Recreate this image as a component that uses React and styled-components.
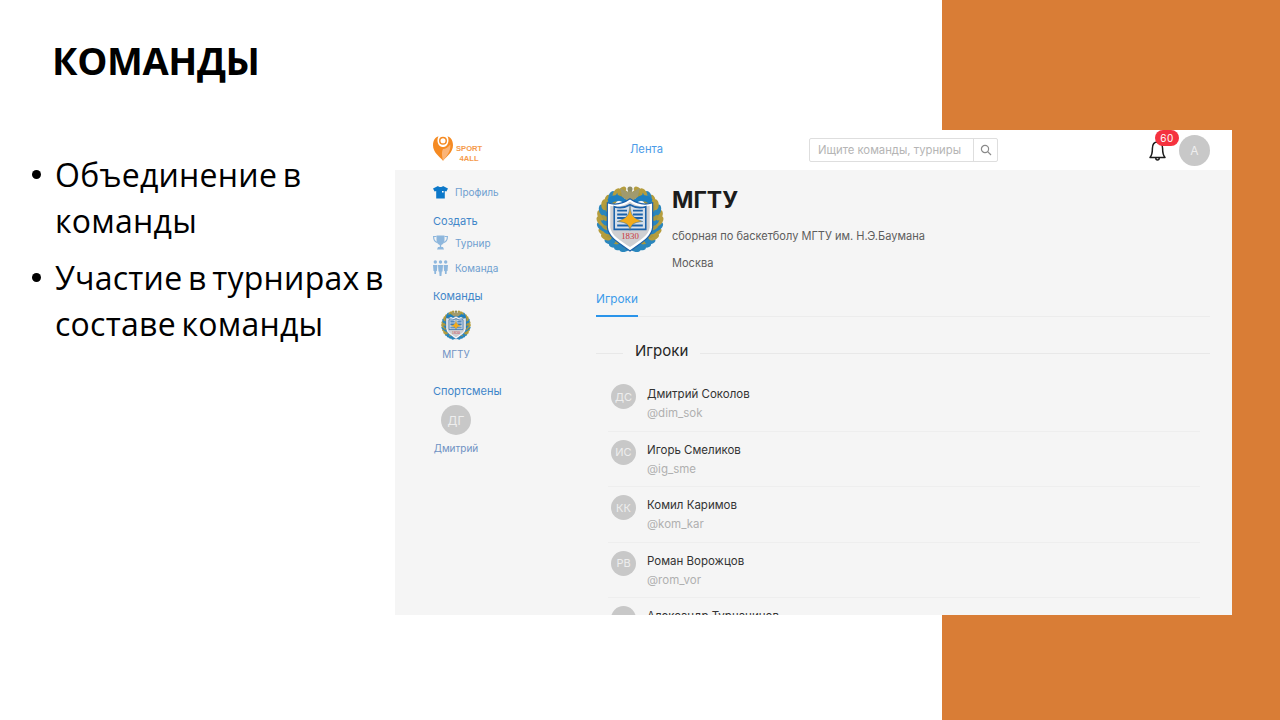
import React from "react";
import styled, { createGlobalStyle } from "styled-components";

const Global = createGlobalStyle`
  html, body { margin: 0; padding: 0; background: #fff; }
  #root { width: 1280px; height: 720px; overflow: hidden; }
  * { box-sizing: border-box; }
`;

const uiFont = `"Inter", "DejaVu Sans", sans-serif`;

const Slide = styled.div`
  position: relative;
  width: 1280px;
  height: 720px;
  background: #fff;
  display: flex;
  overflow: hidden;
`;
const OrangeStrip = styled.div`
  position: absolute;
  top: 0;
  right: 0;
  bottom: 0;
  width: 338px;
  background: #d97d36;
`;
const TextColumn = styled.section`
  width: 395px;
  flex: none;
  padding: 35px 0 0 31px;
  font-family: "Open Sans", "Liberation Sans", sans-serif;
  color: #000;
`;
const Title = styled.h1`
  margin: 0 0 67px 21px;
  font-size: 38px;
  line-height: 50px;
  font-weight: 700;
  letter-spacing: -0.4px;
`;
const Bullets = styled.ul`
  list-style: none;
  margin: 0;
  padding: 0;
  display: flex;
  flex-direction: column;
  gap: 11px;
`;
const Bullet = styled.li`
  position: relative;
  padding-left: 24px;
  font-size: 32px;
  line-height: 46px;
  letter-spacing: 0.25px;
  word-spacing: -3px;
  &::before {
    content: "";
    position: absolute;
    left: 1px;
    top: 18px;
    width: 9px;
    height: 9px;
    border-radius: 50%;
    background: #000;
  }
`;

const AppWindow = styled.div`
  position: relative;
  margin-top: 130px;
  width: 837px;
  height: 485px;
  background: #f5f5f5;
  overflow: hidden;
  font-family: ${uiFont};
  display: flex;
  flex-direction: column;
`;
const Header = styled.header`
  height: 40px;
  flex: none;
  background: #fff;
  display: flex;
  align-items: center;
  padding-left: 38px;
  position: relative;
`;
const Logo = styled.div`
  width: 197px;
  display: flex;
  align-items: center;
  gap: 3px;
  svg { margin-bottom: 3px; }
`;
const LogoText = styled.div`
  font-family: "Liberation Sans", sans-serif;
  font-size: 7.6px;
  line-height: 10px;
  font-weight: 700;
  color: #f59a4b;
  text-align: center;
  margin-top: 7px;
`;
const NavLink = styled.a`
  width: 179px;
  font-size: 11.2px;
  color: #4c9be8;
  margin-bottom: 2px;
`;
const Search = styled.div`
  width: 189px;
  height: 24px;
  background: #fff;
  border: 1px solid #dedede;
  border-radius: 2px;
  display: flex;
  align-items: center;
`;
const SearchText = styled.div`
  flex: 1;
  padding-left: 8px;
  font-size: 11.3px;
  color: #b5b5b5;
  white-space: nowrap;
  overflow: hidden;
`;
const SearchButton = styled.div`
  width: 24px;
  height: 100%;
  flex: none;
  border-left: 1px solid #dedede;
  display: flex;
  align-items: center;
  justify-content: center;
`;
const BellWrap = styled.div`
  margin-left: 149px;
  width: 21px;
  height: 24px;
  position: relative;
  top: 1px;
`;
const Badge = styled.span`
  position: absolute;
  left: 8px;
  top: -9px;
  width: 24px;
  height: 16px;
  border-radius: 8px;
  background: #f5323f;
  color: #fff;
  font-size: 10px;
  line-height: 16px;
  letter-spacing: 0.4px;
  text-align: center;
`;
const Avatar = styled.div`
  width: ${(p) => p.$size}px;
  height: ${(p) => p.$size}px;
  flex: none;
  border-radius: 50%;
  background: #c8c8c8;
  color: #eeeeee;
  font-size: ${(p) => p.$font}px;
  display: flex;
  align-items: center;
  justify-content: center;
`;
const HeaderAvatar = styled(Avatar)`
  margin-left: 11px;
`;

const Body = styled.div`
  flex: 1;
  min-height: 0;
  display: flex;
`;
const Sidebar = styled.aside`
  width: 201px;
  flex: none;
  padding: 14px 0 0 38px;
  display: flex;
  flex-direction: column;
`;
const SideItem = styled.div`
  height: ${(p) => p.$h}px;
  display: flex;
  align-items: center;
  gap: 7px;
  font-size: 10px;
  color: #6f9fd0;
`;
const SideHeading = styled.div`
  font-size: 11px;
  line-height: 14px;
  color: #3f86c9;
  margin-top: ${(p) => p.$mt}px;
  margin-bottom: ${(p) => p.$mb || 0}px;
`;
const SideEntity = styled.div`
  width: 46px;
  margin-top: ${(p) => p.$mt || 0}px;
  display: flex;
  flex-direction: column;
  align-items: center;
  gap: ${(p) => p.$gap}px;
  font-size: 10px;
  color: #6f92c4;
  white-space: nowrap;
`;

const Main = styled.main`
  flex: 1;
  min-width: 0;
  padding: 15px 22px 0 0;
`;
const TeamHead = styled.div`
  display: flex;
  gap: 8px;
  height: 102px;
`;
const TeamInfo = styled.div`
  display: flex;
  flex-direction: column;
`;
const TeamName = styled.h2`
  margin: 0;
  font-size: 23px;
  line-height: 30px;
  font-weight: 700;
  color: #1c1c1c;
`;
const TeamLine = styled.p`
  margin: ${(p) => p.$mt}px 0 0;
  font-size: 11.05px;
  line-height: 14px;
  color: #5d5d5d;
`;
const Tabs = styled.div`
  height: 30px;
  border-bottom: 1px solid #ececec;
`;
const Tab = styled.div`
  display: inline-block;
  height: 30px;
  padding-top: 5px;
  border-bottom: 2px solid #2a94ea;
  font-size: 11.8px;
  line-height: 14px;
  color: #3c9bea;
`;
const SectionTitle = styled.div`
  margin-top: 25px;
  display: flex;
  align-items: center;
  gap: 12px;
  font-size: 15px;
  line-height: 18px;
  color: #262626;
  &::before, &::after {
    content: "";
    height: 1px;
    background: #e8e8e8;
    position: relative;
    top: 2px;
  }
  &::before { width: 27px; }
  &::after { flex: 1; }
`;
const Players = styled.div`
  margin: 16px 10px 0 12px;
`;
const Player = styled.div`
  height: 55.5px;
  padding: 8px 0 0 3px;
  display: flex;
  gap: 11px;
  border-bottom: 1px solid #eeeeee;
`;
const PlayerName = styled.div`
  font-size: 11.5px;
  line-height: 16px;
  color: #333;
  margin-top: 2px;
`;
const PlayerTag = styled.div`
  font-size: 11.5px;
  line-height: 14px;
  margin-top: 4px;
  color: #b0b0b0;
`;

function Crest({ size }) {
  const leaves = [];
  for (let i = 0; i < 15; i++) {
    const deg = 100 + i * 11;
    const a = (deg * Math.PI) / 180;
    const fill = i < 4 ? "#2a86bd" : i % 3 === 0 ? "#2a86bd" : "#b59d3d";
    [30, 26].forEach((r, k) => {
      const x = 34 + r * Math.cos(a);
      const y = 35 + r * Math.sin(a);
      const f = k ? (i % 2 ? "#2a86bd" : "#a8973f") : fill;
      leaves.push(
        <ellipse key={`l${i}${k}`} cx={x} cy={y} rx="5.5" ry="3.2" fill={f} transform={`rotate(${deg + 60} ${x} ${y})`} />,
        <ellipse key={`r${i}${k}`} cx={68 - x} cy={y} rx="5.5" ry="3.2" fill={f} transform={`rotate(${-deg - 60} ${68 - x} ${y})`} />
      );
    });
  }
  return (
    <svg width={size} height={size} viewBox="0 0 68 69">
      {leaves}
      <path d="M11 15 C16 8 25 10 29 14 L39 14 C43 10 52 8 57 15 L53 19 C47 14 43 16 39 19 L29 19 C25 16 21 14 15 19 Z" fill="#1d7fc0" />
      <path d="M24 3 L31 7 L34 4 L37 7 L44 3 L42 12 L34 18 L26 12 Z" fill="#a09a6e" />
      <circle cx="34" cy="4" r="2.6" fill="#8d8b62" />
      <path d="M11 18 C20 21 27 19 34 14 C41 19 48 21 57 18 L57 43 C56 53 46 58 34 67 C22 58 12 53 11 43 Z" fill="#fff" stroke="#1a5fa8" strokeWidth="1.2" />
      <path d="M14 21 C21 23 29 21 34 17 C39 21 47 23 54 21 L54 43 C53 51 44 56 34 63 C24 56 15 51 14 43 Z" fill="#cfcfd2" />
      <path d="M18 22 C24 24 29 23 34 20 C39 23 44 24 50 22 L50 45 L18 45 Z" fill="#d7e0ea" stroke="#1c63ab" strokeWidth="1.6" />
      <path d="M21 26 H31 M37 26 H47 M21 30 H31 M37 30 H47 M21 33.5 H30 M38 33.5 H47 M21 41 H47" stroke="#1c63ab" strokeWidth="2" />
      <path d="M34 20 C35 30 35.5 33 47 37 C37 38 35.5 40 34 46 C32.5 40 31 38 21 37 C32.5 33 33 30 34 20 Z" fill="#f2ab1c" stroke="#1c63ab" strokeWidth="0.5" />
      <text x="34" y="55" textAnchor="middle" fontFamily="Liberation Serif, serif" fontSize="9" fill="#c9343a">1830</text>
    </svg>
  );
}

const PinLogo = () => (
  <svg width="20" height="27" viewBox="0 0 22 27">
    <path d="M11 27 C7 22 0 18 0 10 C0 4 3 1 6 0 C4 4 5 9 8 11 C9 12 13 12 14 11 C17 9 18 4 16 0 C19 1 22 4 22 10 C22 18 15 22 11 27 Z" fill="#f58a22" />
    <path d="M11 27 C10 22 9 18 11 14 C14 14 17 12 19 9 C20 16 15 22 11 27 Z" fill="#fbb477" />
    <circle cx="11" cy="5" r="3.6" fill="none" stroke="#f58a22" strokeWidth="1.6" />
  </svg>
);
const Shirt = () => (
  <svg width="15" height="14" viewBox="0 0 15 14">
    <path d="M5 1 C6 2.4 9 2.4 10 1 L15 3.4 L13.4 6.6 L11.8 6 L11.8 13.4 L3.2 13.4 L3.2 6 L1.6 6.6 L0 3.4 Z" fill="#0c78c9" />
    <path d="M9 6 H10.6 V7.6 H9 Z" fill="#fff" />
  </svg>
);
const Trophy = () => (
  <svg width="15" height="16" viewBox="0 0 15 16" fill="#8eb7dd">
    <path d="M3.5 0.5 H11.5 V5 C11.5 8 9.5 9.6 8.2 10 V12 H10 L11 14.5 H4 L5 12 H6.8 V10 C5.5 9.6 3.5 8 3.5 5 Z" />
    <path d="M3.5 1.5 H0.6 C0.6 5 2 7 4.5 7.6 M11.5 1.5 H14.4 C14.4 5 13 7 10.5 7.6" fill="none" stroke="#8eb7dd" strokeWidth="1.2" />
  </svg>
);
const People = () => (
  <svg width="15" height="16" viewBox="0 0 15 16" fill="#8eb7dd">
    <circle cx="2.3" cy="2" r="1.7" /><circle cx="7.5" cy="2" r="1.7" /><circle cx="12.7" cy="2" r="1.7" />
    <path d="M0 5 H4.4 L3.9 11 H3.2 L3 14 H1.4 L1.2 11 H0.5 Z" />
    <path d="M5 5 H10 L9.5 11.5 H8.8 L8.4 16 H6.6 L6.2 11.5 H5.5 Z" />
    <path d="M10.6 5 H15 L14.5 11 H13.8 L13.6 14 H12 L11.8 11 H11.1 Z" />
  </svg>
);
const Bell = () => (
  <svg width="21" height="24" viewBox="0 0 21 24" fill="none" stroke="#1c1c1c" strokeWidth="1.5" strokeLinejoin="round">
    <path d="M10.5 3 C7 3 5.4 6 5.4 9.5 C5.4 13 5.2 16 3 18.5 H18 C15.8 16 15.6 13 15.6 9.5 C15.6 6 14 3 10.5 3 Z" />
    <path d="M8.8 19 C8.8 21.6 12.2 21.6 12.2 19" />
  </svg>
);
const Magnifier = () => (
  <svg width="12" height="12" viewBox="0 0 12 12" fill="none" stroke="#8a8a8a" strokeWidth="1.2">
    <circle cx="5" cy="5" r="3.6" /><path d="M7.7 7.7 L11 11" />
  </svg>
);

const players = [
  ["ДС", "Дмитрий Соколов", "@dim_sok"],
  ["ИС", "Игорь Смеликов", "@ig_sme"],
  ["КК", "Комил Каримов", "@kom_kar"],
  ["РВ", "Роман Ворожцов", "@rom_vor"],
  ["АТ", "Александр Турчанинов", ""],
];

export default function App() {
  return (
    <Slide>
      <Global />
      <OrangeStrip />
      <TextColumn>
        <Title>КОМАНДЫ</Title>
        <Bullets>
          <Bullet>Объединение в команды</Bullet>
          <Bullet>Участие в турнирах в составе команды</Bullet>
        </Bullets>
      </TextColumn>
      <AppWindow>
        <Header>
          <Logo>
            <PinLogo />
            <LogoText>SPORT<br />4ALL</LogoText>
          </Logo>
          <NavLink>Лента</NavLink>
          <Search>
            <SearchText>Ищите команды, турниры</SearchText>
            <SearchButton><Magnifier /></SearchButton>
          </Search>
          <BellWrap><Bell /><Badge>60</Badge></BellWrap>
          <HeaderAvatar $size={31} $font={12}>А</HeaderAvatar>
        </Header>
        <Body>
          <Sidebar>
            <SideItem $h={16}><Shirt />Профиль</SideItem>
            <SideHeading $mt={14} $mb={2}>Создать</SideHeading>
            <SideItem $h={25}><Trophy />Турнир</SideItem>
            <SideItem $h={25}><People />Команда</SideItem>
            <SideHeading $mt={9}>Команды</SideHeading>
            <SideEntity $mt={7} $gap={8}>
              <Crest size={30} />
              МГТУ
            </SideEntity>
            <SideHeading $mt={24}>Спортсмены</SideHeading>
            <SideEntity $mt={7} $gap={7}>
              <Avatar $size={30} $font={12}>ДГ</Avatar>
              Дмитрий
            </SideEntity>
          </Sidebar>
          <Main>
            <TeamHead>
              <Crest size={68} />
              <TeamInfo>
                <TeamName>МГТУ</TeamName>
                <TeamLine $mt={14}>сборная по баскетболу МГТУ им. Н.Э.Баумана</TeamLine>
                <TeamLine $mt={13}>Москва</TeamLine>
              </TeamInfo>
            </TeamHead>
            <Tabs><Tab>Игроки</Tab></Tabs>
            <SectionTitle>Игроки</SectionTitle>
            <Players>
              {players.map(([initials, name, tag]) => (
                <Player key={name}>
                  <Avatar $size={25} $font={11}>{initials}</Avatar>
                  <div>
                    <PlayerName>{name}</PlayerName>
                    {tag && <PlayerTag>{tag}</PlayerTag>}
                  </div>
                </Player>
              ))}
            </Players>
          </Main>
        </Body>
      </AppWindow>
    </Slide>
  );
}
